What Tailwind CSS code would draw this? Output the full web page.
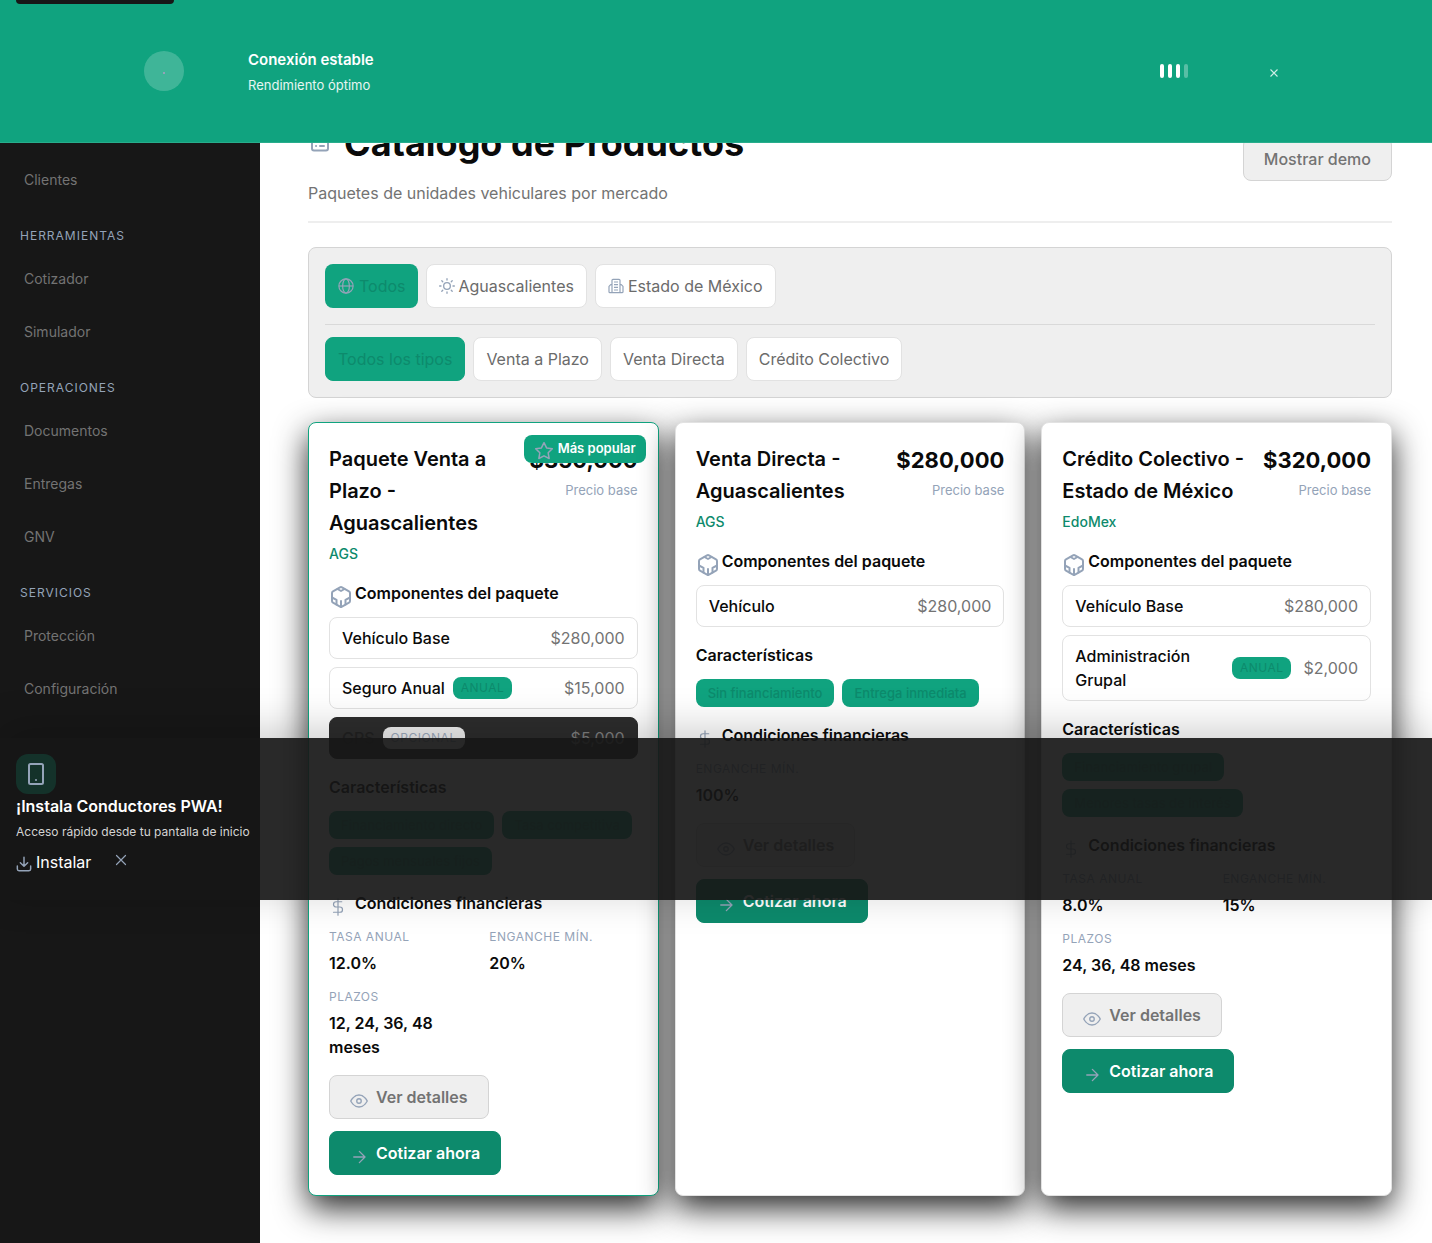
<!DOCTYPE html>
<html lang="es">
<head>
<meta charset="utf-8">
<meta name="viewport" content="width=device-width, initial-scale=1">
<title>Catálogo de Productos</title>
<script src="https://cdn.jsdelivr.net/npm/@tailwindcss/browser@4"></script>
</head>
<body class="bg-white font-['Inter',sans-serif] text-base text-[#0a0a0a]">
<svg class="hidden" aria-hidden="true">
  <symbol id="cube" viewBox="0 0 24 24" fill="none" stroke="currentColor" stroke-width="2" stroke-linecap="round" stroke-linejoin="round"><path d="M21 16V8a2 2 0 0 0-1-1.730l-7-4a2 2 0 0 0-2 0l-7 4A2 2 0 0 0 3 8v8a2 2 0 0 0 1 1.730l7 4a2 2 0 0 0 2 0l7-4A2 2 0 0 0 21 16z"/><path d="M8.500 4 12 6l3.500-2M7.500 19.500v-4.700L3 12.500M21 12.500l-4.500 2.300v4.700M12 22v-6"/></symbol>
  <symbol id="dollar" viewBox="0 0 24 24" fill="none" stroke="currentColor" stroke-width="1.6" stroke-linecap="round" stroke-linejoin="round"><path d="M12 1v22M17 5H9.500a3.500 3.500 0 0 0 0 7h5a3.500 3.500 0 0 1 0 7H6"/></symbol>
  <symbol id="eye" viewBox="0 0 24 24" fill="none" stroke="currentColor" stroke-width="1.8" stroke-linecap="round" stroke-linejoin="round"><path d="M1 12s4-8 11-8 11 8 11 8-4 8-11 8S1 12 1 12z"/><circle cx="12" cy="12" r="3"/></symbol>
  <symbol id="arrow" viewBox="0 0 24 24" fill="none" stroke="currentColor" stroke-width="1.800" stroke-linecap="round" stroke-linejoin="round"><path d="M5 12h15M12.500 4.500 20 12l-7.500 7.500"/></symbol>
</svg>

<div class="relative flex min-h-screen overflow-hidden">
  <aside class="w-[260px] shrink-0 bg-[#171717] pt-[153px] text-sm text-[#737373]">
    <nav aria-label="Principal">
      <a href="#" class="flex h-[53px] items-center pl-6">Clientes</a>
      <h2 class="mt-[21px] mb-2 pl-5 text-xs leading-[17px] tracking-[1px] text-[#94a3b8]">HERRAMIENTAS</h2>
      <a href="#" class="flex h-[53px] items-center pl-6">Cotizador</a>
      <a href="#" class="flex h-[53px] items-center pl-6">Simulador</a>
      <h2 class="mt-[21px] mb-2 pl-5 text-xs leading-[17px] tracking-[1px] text-[#94a3b8]">OPERACIONES</h2>
      <a href="#" class="flex h-[53px] items-center pl-6">Documentos</a>
      <a href="#" class="flex h-[53px] items-center pl-6">Entregas</a>
      <a href="#" class="flex h-[53px] items-center pl-6">GNV</a>
      <h2 class="mt-[21px] mb-2 pl-5 text-xs leading-[17px] tracking-[1px] text-[#94a3b8]">SERVICIOS</h2>
      <a href="#" class="flex h-[53px] items-center pl-6">Protección</a>
      <a href="#" class="flex h-[53px] items-center pl-6">Configuración</a>
    </nav>
  </aside>

  <main class="min-w-0 flex-1 pt-[117px] pr-10 pb-12 pl-12">
    <header class="flex items-start justify-between border-b-2 border-[#eeeeee] pb-4">
      <div>
        <h1 class="flex items-center gap-3 text-4xl leading-[52px] font-bold">
          <svg class="size-6 text-[#94a3b8]" viewBox="0 0 24 24" fill="none" stroke="currentColor" stroke-width="2" stroke-linecap="round"><rect x="4" y="3" width="16" height="16.500" rx="2"/><path d="M8 7h.1M12 7h4M8 11h.1M12 11h4M8 15h.1M12 15h4"/></svg>
          Catálogo de Productos
        </h1>
        <p class="mt-3 leading-6 text-[#737373]">Paquetes de unidades vehiculares por mercado</p>
      </div>
      <button class="mt-5 h-11 rounded-lg border border-[#d4d4d4] bg-[#efefef] px-5 font-medium text-[#737373]">Mostrar demo</button>
    </header>

    <section class="mt-6 rounded-lg border border-[#d4d4d4] bg-[#efefef] p-4" aria-label="Filtros">
      <div class="flex flex-wrap gap-2 border-b border-[#d9d9d9] pb-4 text-[#6b6b6b]">
        <button class="flex h-11 items-center gap-1 rounded-lg bg-[#10a37f] px-3 text-[#0d8a6c]">
          <svg class="size-[18px] text-[#94a3b8]" viewBox="0 0 24 24" fill="none" stroke="currentColor" stroke-width="1.600"><circle cx="12" cy="12" r="9.500"/><ellipse cx="12" cy="12" rx="4.500" ry="9.500"/><path d="M2.500 12h19"/></svg>
          Todos</button>
        <button class="flex h-11 items-center gap-1 rounded-lg border border-[#e2e2e2] bg-white px-3">
          <svg class="size-4 text-[#94a3b8]" viewBox="0 0 24 24" fill="none" stroke="currentColor" stroke-width="2" stroke-linecap="round"><circle cx="12" cy="12" r="5"/><path d="M12 1v2M12 21v2M1 12h2M21 12h2M4.200 4.200 5.600 5.600M18.400 18.400l1.400 1.400M4.200 19.800 5.600 18.400M18.400 5.600l1.400-1.400"/></svg>
          Aguascalientes</button>
        <button class="flex h-11 items-center gap-1 rounded-lg border border-[#e2e2e2] bg-white px-3">
          <svg class="size-4 text-[#94a3b8]" viewBox="0 0 24 24" fill="none" stroke="currentColor" stroke-width="1.800" stroke-linejoin="round"><path d="M6 22V3.500A1.500 1.500 0 0 1 7.500 2h9A1.500 1.500 0 0 1 18 3.500V22M6 10H4l-2.500 2.500V20.500A1.500 1.500 0 0 0 3 22h18a1.500 1.500 0 0 0 1.500-1.500V12.500L20 10h-2M9 6h6M9 10h6M9 14h6M9 18h6"/></svg>
          Estado de México</button>
      </div>
      <div class="flex flex-wrap gap-2 pt-3 text-[#6b6b6b]">
        <button class="h-11 rounded-lg border border-[#10a37f] bg-[#10a37f] px-3 text-[#0d8a6c]">Todos los tipos</button>
        <button class="h-11 rounded-lg border border-[#e2e2e2] bg-white px-3">Venta a Plazo</button>
        <button class="h-11 rounded-lg border border-[#e2e2e2] bg-white px-3">Venta Directa</button>
        <button class="h-11 rounded-lg border border-[#e2e2e2] bg-white px-3">Crédito Colectivo</button>
      </div>
    </section>

    <section class="mt-6 grid grid-cols-3 gap-4" aria-label="Productos">
      <article class="relative rounded-lg border border-[#10a37f] bg-white p-5 shadow-[0_12px_32px_rgba(0,0,0,0.85)]">
        <div class="absolute top-3 right-3 flex h-7 items-center gap-1 rounded-lg bg-[#10a37f] px-2.5 text-[13px] font-semibold text-white">
          <svg class="mt-1 size-5 text-[#94a3b8]" viewBox="0 0 24 24" fill="none" stroke="currentColor" stroke-width="1.800" stroke-linejoin="round"><path d="m12 2 3.100 6.300 6.900 1-5 4.900 1.200 6.800-6.200-3.200L5.800 21 7 14.200 2 9.300l6.900-1z"/></svg>
          Más popular</div>
        <div class="flex justify-between gap-3">
          <div>
            <h3 class="text-xl leading-8 font-semibold">Paquete Venta a Plazo - Aguascalientes</h3>
            <p class="mt-1 text-sm leading-[22px] font-medium text-[#0d8a6c]">AGS</p>
          </div>
          <div class="text-right">
            <p class="text-[22px] leading-[34px] font-bold">$350,000</p>
            <p class="text-[13px] leading-[26px] whitespace-nowrap text-[#94a3b8]">Precio base</p>
          </div>
        </div>
        <h4 class="mt-4 flex h-6 items-center gap-0.5 font-semibold"><svg class="mt-2 size-6 text-[#94a3b8]"><use href="#cube"/></svg>Componentes del paquete</h4>
        <ul class="mt-3 flex flex-col gap-2">
          <li class="flex items-center justify-between rounded-lg border border-[#e2e2e2] px-3 py-2"><span class="font-medium">Vehículo Base</span><span class="text-[#737373]">$280,000</span></li>
          <li class="flex items-center gap-2 rounded-lg border border-[#e2e2e2] px-3 py-2"><span class="font-medium">Seguro Anual</span><span class="rounded-lg bg-[#10a37f] px-2 text-xs leading-[22px] tracking-[0.5px] text-[#0d8a6c]">ANUAL</span><span class="ml-auto text-[#737373]">$15,000</span></li>
          <li class="flex items-center gap-2 rounded-lg border border-[#171717] bg-[#171717] px-3 py-2 opacity-90"><span class="font-medium">GPS</span><span class="rounded-lg bg-[#efefef] px-2 text-xs leading-[22px] tracking-[0.5px] text-[#94a3b8]">OPCIONAL</span><span class="ml-auto text-[#737373]">$5,000</span></li>
        </ul>
        <h4 class="mt-4 leading-6 font-semibold">Características</h4>
        <ul class="mt-3 flex flex-wrap gap-2 text-[13px] leading-7 font-medium text-[#0d8a6c]">
          <li class="rounded-lg bg-[#10a37f] px-3">Financiamiento directo</li>
          <li class="rounded-lg bg-[#10a37f] px-3">Tasa competitiva</li>
          <li class="rounded-lg bg-[#10a37f] px-3">Pagos mensuales fijos</li>
        </ul>
        <h4 class="mt-4 flex h-6 items-center gap-2 font-semibold"><svg class="mt-2 size-[18px] text-[#94a3b8]"><use href="#dollar"/></svg>Condiciones financieras</h4>
        <dl class="mt-3 grid grid-cols-2 gap-3">
          <div><dt class="mb-1 text-xs leading-5 tracking-[0.5px] text-[#94a3b8]">TASA ANUAL</dt><dd class="leading-6 font-semibold">12.0%</dd></div>
          <div><dt class="mb-1 text-xs leading-5 tracking-[0.5px] text-[#94a3b8]">ENGANCHE MÍN.</dt><dd class="leading-6 font-semibold">20%</dd></div>
          <div><dt class="mb-1 text-xs leading-5 tracking-[0.5px] text-[#94a3b8]">PLAZOS</dt><dd class="leading-6 font-semibold">12, 24, 36, 48 meses</dd></div>
        </dl>
        <div class="mt-4 flex flex-col items-start gap-3 font-semibold">
          <button class="flex h-11 items-center gap-2 rounded-lg border border-[#d4d4d4] bg-[#efefef] px-5 text-[#737373]"><svg class="mt-2 size-[18px] text-[#94a3b8]"><use href="#eye"/></svg>Ver detalles</button>
          <button class="flex h-11 items-center gap-2 rounded-lg border border-[#0d8a6c] bg-[#0d8a6c] px-5 text-white"><svg class="mt-2 size-[18px] text-[#94a3b8]"><use href="#arrow"/></svg>Cotizar ahora</button>
        </div>
      </article>

      <article class="relative rounded-lg border border-[#e2e2e2] bg-white p-5 shadow-[0_12px_32px_rgba(0,0,0,0.85)]">
        <div class="flex justify-between gap-3">
          <div>
            <h3 class="text-xl leading-8 font-semibold">Venta Directa - Aguascalientes</h3>
            <p class="mt-1 text-sm leading-[22px] font-medium text-[#0d8a6c]">AGS</p>
          </div>
          <div class="text-right">
            <p class="text-[22px] leading-[34px] font-bold">$280,000</p>
            <p class="text-[13px] leading-[26px] whitespace-nowrap text-[#94a3b8]">Precio base</p>
          </div>
        </div>
        <h4 class="mt-4 flex h-6 items-center gap-0.5 font-semibold"><svg class="mt-2 size-6 text-[#94a3b8]"><use href="#cube"/></svg>Componentes del paquete</h4>
        <ul class="mt-3 flex flex-col gap-2">
          <li class="flex items-center justify-between rounded-lg border border-[#e2e2e2] px-3 py-2"><span class="font-medium">Vehículo</span><span class="text-[#737373]">$280,000</span></li>
        </ul>
        <h4 class="mt-4 leading-6 font-semibold">Características</h4>
        <ul class="mt-3 flex flex-wrap gap-2 text-[13px] leading-7 font-medium text-[#0d8a6c]">
          <li class="rounded-lg bg-[#10a37f] px-3">Sin financiamiento</li>
          <li class="rounded-lg bg-[#10a37f] px-3">Entrega inmediata</li>
        </ul>
        <h4 class="mt-4 flex h-6 items-center gap-2 font-semibold"><svg class="mt-2 size-[18px] text-[#94a3b8]"><use href="#dollar"/></svg>Condiciones financieras</h4>
        <dl class="mt-3 grid grid-cols-2 gap-3">
          <div><dt class="mb-1 text-xs leading-5 tracking-[0.5px] text-[#94a3b8]">ENGANCHE MÍN.</dt><dd class="leading-6 font-semibold">100%</dd></div>
        </dl>
        <div class="mt-4 flex flex-col items-start gap-3 font-semibold">
          <button class="flex h-11 items-center gap-2 rounded-lg border border-[#d4d4d4] bg-[#efefef] px-5 text-[#737373]"><svg class="mt-2 size-[18px] text-[#94a3b8]"><use href="#eye"/></svg>Ver detalles</button>
          <button class="flex h-11 items-center gap-2 rounded-lg border border-[#0d8a6c] bg-[#0d8a6c] px-5 text-white"><svg class="mt-2 size-[18px] text-[#94a3b8]"><use href="#arrow"/></svg>Cotizar ahora</button>
        </div>
      </article>

      <article class="relative rounded-lg border border-[#e2e2e2] bg-white p-5 shadow-[0_12px_32px_rgba(0,0,0,0.85)]">
        <div class="flex justify-between gap-3">
          <div>
            <h3 class="text-xl leading-8 font-semibold">Crédito Colectivo - Estado de México</h3>
            <p class="mt-1 text-sm leading-[22px] font-medium text-[#0d8a6c]">EdoMex</p>
          </div>
          <div class="text-right">
            <p class="text-[22px] leading-[34px] font-bold">$320,000</p>
            <p class="text-[13px] leading-[26px] whitespace-nowrap text-[#94a3b8]">Precio base</p>
          </div>
        </div>
        <h4 class="mt-4 flex h-6 items-center gap-0.5 font-semibold"><svg class="mt-2 size-6 text-[#94a3b8]"><use href="#cube"/></svg>Componentes del paquete</h4>
        <ul class="mt-3 flex flex-col gap-2">
          <li class="flex items-center justify-between rounded-lg border border-[#e2e2e2] px-3 py-2"><span class="font-medium">Vehículo Base</span><span class="text-[#737373]">$280,000</span></li>
          <li class="flex items-center gap-3 rounded-lg border border-[#e2e2e2] px-3 py-2"><span class="flex-1 font-medium">Administración Grupal</span><span class="rounded-lg bg-[#10a37f] px-2 text-xs leading-[22px] tracking-[0.5px] text-[#0d8a6c]">ANUAL</span><span class="text-[#737373]">$2,000</span></li>
        </ul>
        <h4 class="mt-4 leading-6 font-semibold">Características</h4>
        <ul class="mt-3 flex flex-wrap gap-2 text-[13px] leading-7 font-medium text-[#0d8a6c]">
          <li class="rounded-lg bg-[#10a37f] px-3">Financiamiento grupal</li>
          <li class="rounded-lg bg-[#10a37f] px-3">Menores tasas de interés</li>
        </ul>
        <h4 class="mt-4 flex h-6 items-center gap-2 font-semibold"><svg class="mt-2 size-[18px] text-[#94a3b8]"><use href="#dollar"/></svg>Condiciones financieras</h4>
        <dl class="mt-3 grid grid-cols-2 gap-3">
          <div><dt class="mb-1 text-xs leading-5 tracking-[0.5px] text-[#94a3b8]">TASA ANUAL</dt><dd class="leading-6 font-semibold">8.0%</dd></div>
          <div><dt class="mb-1 text-xs leading-5 tracking-[0.5px] text-[#94a3b8]">ENGANCHE MÍN.</dt><dd class="leading-6 font-semibold">15%</dd></div>
          <div><dt class="mb-1 text-xs leading-5 tracking-[0.5px] text-[#94a3b8]">PLAZOS</dt><dd class="leading-6 font-semibold whitespace-nowrap">24, 36, 48 meses</dd></div>
        </dl>
        <div class="mt-4 flex flex-col items-start gap-3 font-semibold">
          <button class="flex h-11 items-center gap-2 rounded-lg border border-[#d4d4d4] bg-[#efefef] px-5 text-[#737373]"><svg class="mt-2 size-[18px] text-[#94a3b8]"><use href="#eye"/></svg>Ver detalles</button>
          <button class="flex h-11 items-center gap-2 rounded-lg border border-[#0d8a6c] bg-[#0d8a6c] px-5 text-white"><svg class="mt-2 size-[18px] text-[#94a3b8]"><use href="#arrow"/></svg>Cotizar ahora</button>
        </div>
      </article>
    </section>
  </main>

  <!-- Install prompt, laid over the page -->
  <section class="absolute inset-x-0 top-[738px] h-[162px] bg-[#171717]/92 p-4 text-white shadow-[0_-8px_40px_rgba(0,0,0,0.2)]" aria-label="Instalar aplicación">
    <div class="flex size-10 items-center justify-center rounded-xl bg-[#10a37f]/20">
      <svg class="size-6 text-[#94a3b8]" viewBox="0 0 24 24" fill="none" stroke="currentColor" stroke-width="2" stroke-linecap="round"><rect x="5" y="2" width="14" height="20" rx="1.500"/><path d="M12 18h.01"/></svg>
    </div>
    <h2 class="leading-6 font-semibold">¡Instala Conductores PWA!</h2>
    <p class="mt-1 text-xs leading-5 text-[#d4d4d4]">Acceso rápido desde tu pantalla de inicio</p>
    <div class="mt-1 flex items-center gap-6">
      <button class="flex h-8 items-center gap-1"><svg class="mt-1 size-4 text-[#94a3b8]" viewBox="0 0 24 24" fill="none" stroke="currentColor" stroke-width="2.200" stroke-linecap="round" stroke-linejoin="round"><path d="M12 2v13M6.500 10l5.500 5.500L17.500 10M2 15v4.500A2.500 2.500 0 0 0 4.500 22h15a2.500 2.500 0 0 0 2.500-2.500V15"/></svg>Instalar</button>
      <button class="flex h-7 items-center self-start" aria-label="Cerrar"><svg class="size-3 text-[#94a3b8]" viewBox="0 0 12 12" fill="none" stroke="currentColor" stroke-width="1.200" stroke-linecap="round"><path d="m1.500 1.500 9 9M10.500 1.500l-9 9"/></svg></button>
    </div>
  </section>

  <!-- Connection banner -->
  <div class="absolute inset-x-0 top-0 flex h-[143px] items-center gap-16 border-b border-[#28ad8c] bg-[#10a37f] pr-[136px] pl-36 text-white" role="status">
    <div class="flex size-10 items-center justify-center rounded-full bg-white/20"><span class="mt-1 size-0.5 bg-[#94a3b8]"></span></div>
    <div class="flex-1 pt-1">
      <p class="text-[15px] leading-6 font-semibold">Conexión estable</p>
      <p class="text-[13px] leading-[26px] text-white/90">Rendimiento óptimo</p>
    </div>
    <div class="flex gap-1" aria-label="Señal">
      <span class="h-3.5 w-1 rounded-[2px] bg-white"></span><span class="h-3.5 w-1 rounded-[2px] bg-white"></span><span class="h-3.5 w-1 rounded-[2px] bg-white"></span><span class="h-3.5 w-1 rounded-[2px] bg-white/30"></span>
    </div>
    <button class="flex h-11 w-11 items-center justify-center pt-1 text-white/80" aria-label="Cerrar aviso"><svg class="size-2.5" viewBox="0 0 10 10" fill="none" stroke="currentColor" stroke-width="1.100"><path d="m1.500 1.500 7 7M8.500 1.500l-7 7"/></svg></button>
  </div>
  <a href="#" class="absolute top-0 left-4 h-1 w-[158px] rounded-b-md bg-[#171717]" aria-label="Saltar al contenido"></a>
</div>
</body>
</html>
